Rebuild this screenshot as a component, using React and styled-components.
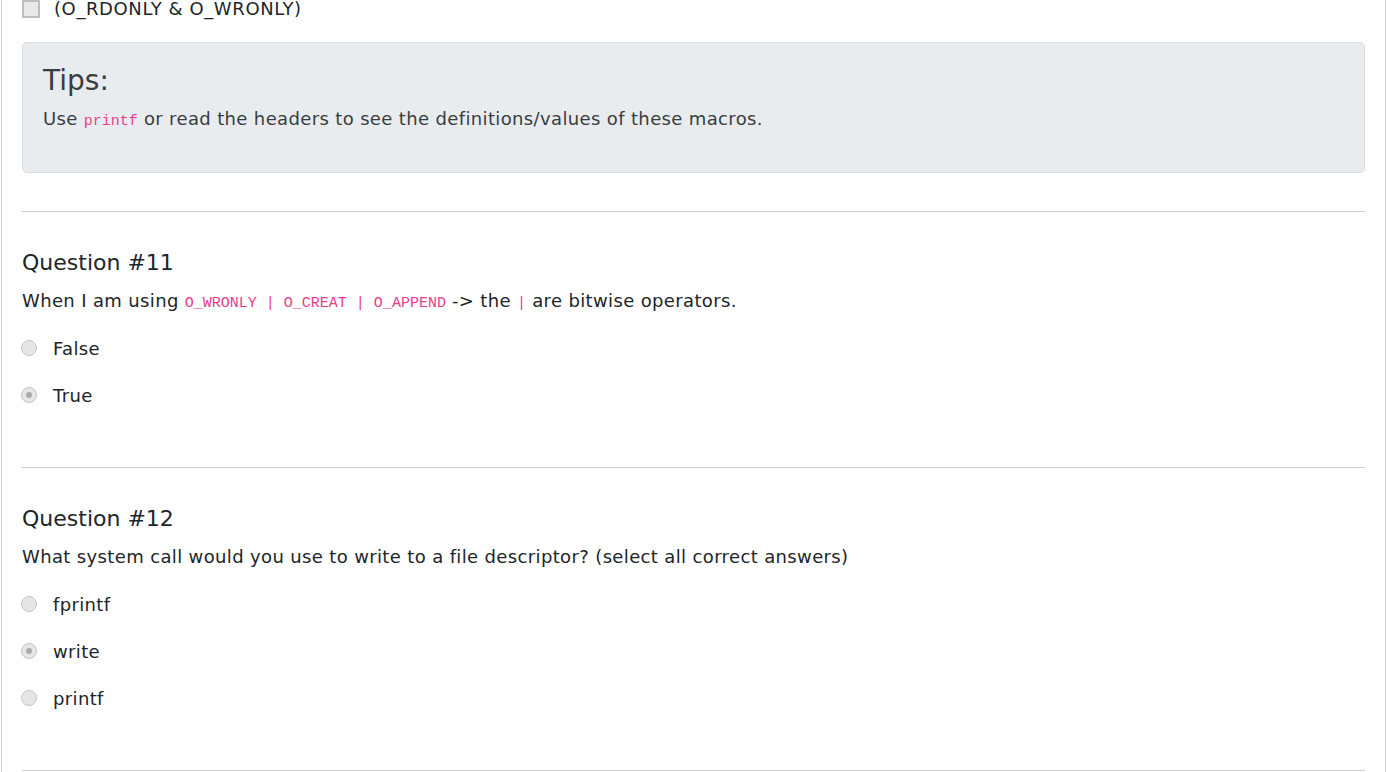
import React from "react";
import styled, { createGlobalStyle } from "styled-components";

const Global = createGlobalStyle`
    html, body {
        margin: 0;
        padding: 0;
        background: #ffffff;
    }
    body {
        font-family: "DejaVu Sans", "Open Sans", sans-serif;
        color: #212529;
        overflow: hidden;
    }
`;

const Page = styled.div`
    margin-left: 1px;
    width: 1343px;
    min-height: 772px;
    padding: 0 20px;
    border-left: 1px solid #d4d4d4;
    border-right: 1px solid #d4d4d4;
`;

const CheckRow = styled.label`
    display: flex;
    align-items: center;
    gap: 14px;
    height: 18px;
    font-size: 18px;
    letter-spacing: 0.6px;
    line-height: 18px;
    color: #212529;
`;

const CheckBox = styled.span`
    width: 14px;
    height: 14px;
    margin-top: -1px;
    border: 2px solid #bdbdbd;
    background: #e9e9e9;
    border-radius: 1px;
`;

const TipBox = styled.div`
    margin-top: 24px;
    height: 131px;
    box-sizing: border-box;
    padding: 20px 20px;
    background: #e9ecef;
    border: 1px solid #d9dcdf;
    border-radius: 5px;
    color: #383d41;
`;

const TipTitle = styled.h3`
    margin: 0 0 8px;
    font-size: 28px;
    font-weight: 400;
    line-height: 35px;
`;

const Text = styled.p`
    margin: 0;
    font-size: 18px;
    letter-spacing: 0.36px;
    line-height: 26px;
`;

const Code = styled.code`
    font-family: "Liberation Mono", "DejaVu Sans Mono", monospace;
    font-size: 15px;
    line-height: 1;
    letter-spacing: 0;
    color: #e83e8c;
`;

const Rule = styled.hr`
    margin: ${(p) => p.$top}px 0 0;
    border: 0;
    border-top: 1px solid #cfcfcf;
`;

const Question = styled.section`
    padding-top: 37px;
`;

const QTitle = styled.h4`
    margin: 0 0 11px;
    font-size: 22px;
    font-weight: 400;
    line-height: 28px;
    color: #212529;
`;

const Options = styled.div`
    display: flex;
    flex-direction: column;
    gap: 25px;
    margin-top: 23px;
`;

const Option = styled.label`
    display: flex;
    align-items: center;
    gap: 15px;
    height: 22px;
    font-size: 18px;
    letter-spacing: 0.36px;
`;

const Radio = styled.span`
    position: relative;
    width: 14px;
    height: 14px;
    margin-left: -1px;
    margin-right: 1px;
    border-radius: 50%;
    border: 1px solid #c4c4c4;
    background: #e6e6e6;
    &::after {
        content: "";
        display: ${(p) => (p.$checked ? "block" : "none")};
        position: absolute;
        left: 4px;
        top: 4px;
        width: 6px;
        height: 6px;
        border-radius: 50%;
        background: #a9a9a9;
    }
`;

const questions = [
    {
        title: "Question #11",
        text: (
            <>
                When I am using <Code>O_WRONLY | O_CREAT | O_APPEND</Code> -&gt; the <Code>|</Code> are bitwise operators.
            </>
        ),
        options: [
            { label: "False", checked: false },
            { label: "True", checked: true },
        ],
    },
    {
        title: "Question #12",
        text: "What system call would you use to write to a file descriptor? (select all correct answers)",
        options: [
            { label: "fprintf", checked: false },
            { label: "write", checked: true },
            { label: "printf", checked: false },
        ],
    },
];

const App = () => (
    <>
        <Global />
        <Page>
            <CheckRow>
                <CheckBox />
                (O_RDONLY &amp; O_WRONLY)
            </CheckRow>
            <TipBox>
                <TipTitle>Tips:</TipTitle>
                <Text>
                    Use <Code>printf</Code> or read the headers to see the definitions/values of these macros.
                </Text>
            </TipBox>
            <Rule $top={38} />
            {questions.map((q) => (
                <React.Fragment key={q.title}>
                    <Question>
                        <QTitle>{q.title}</QTitle>
                        <Text>{q.text}</Text>
                        <Options>
                            {q.options.map((o) => (
                                <Option key={o.label}>
                                    <Radio $checked={o.checked} />
                                    {o.label}
                                </Option>
                            ))}
                        </Options>
                    </Question>
                    <Rule $top={61} />
                </React.Fragment>
            ))}
        </Page>
    </>
);

export default App;
